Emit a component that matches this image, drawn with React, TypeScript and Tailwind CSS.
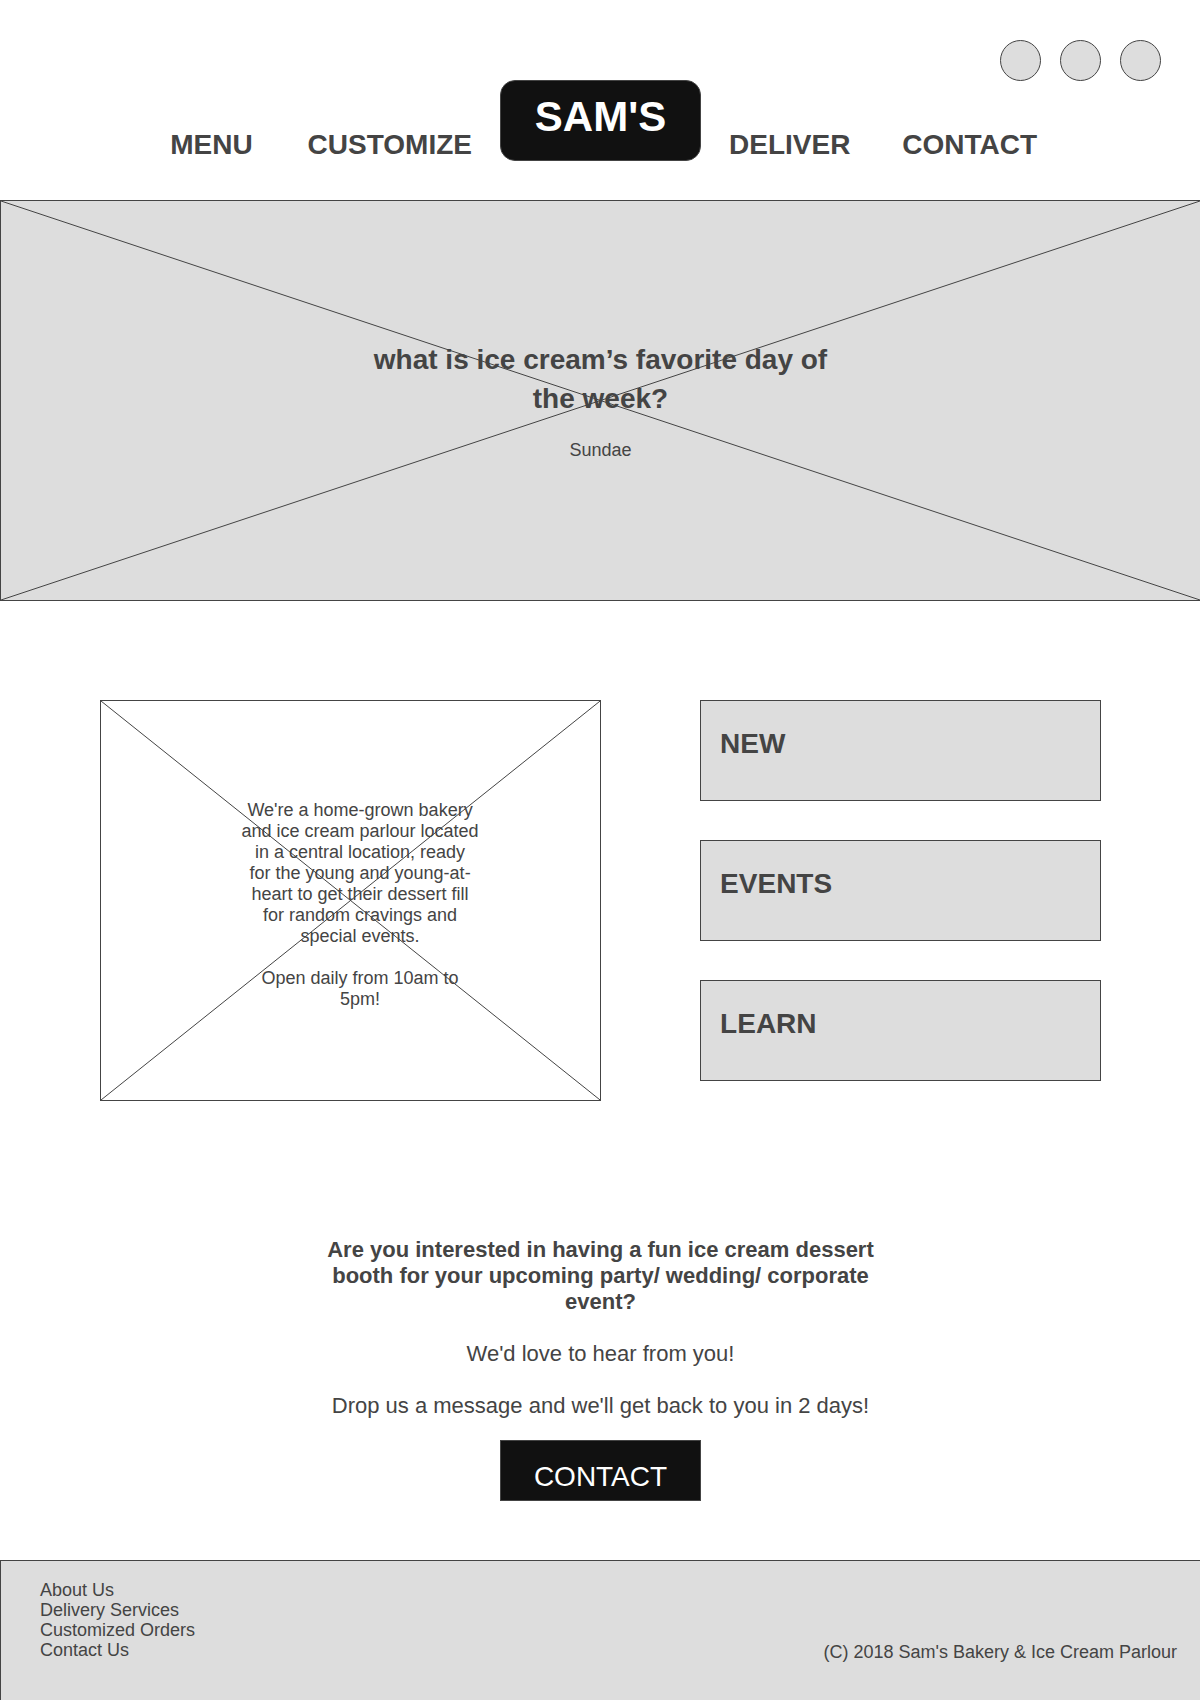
import React from "react";

function Diagonals() {
  return (
    <svg
      aria-hidden="true"
      className="absolute inset-0 h-full w-full"
      viewBox="0 0 100 100"
      preserveAspectRatio="none"
      fill="none"
      stroke="#444444"
      strokeWidth="1"
    >
      <line x1="0" y1="0" x2="100" y2="100" vectorEffect="non-scaling-stroke" />
      <line x1="100" y1="0" x2="0" y2="100" vectorEffect="non-scaling-stroke" />
    </svg>
  );
}

function NavLink({ children }: { children: React.ReactNode }) {
  return (
    <a href="#" className="text-[28px] leading-8 font-bold">
      {children}
    </a>
  );
}

const socials = ["Facebook", "Instagram", "Twitter"];
const topics = ["NEW", "EVENTS", "LEARN"];
const footerLinks = ["About Us", "Delivery Services", "Customized Orders", "Contact Us"];

export default function App() {
  return (
    <div className="flex min-h-screen flex-col overflow-x-hidden bg-white font-['Liberation_Sans',Arial,sans-serif] text-[#444444]">
      <header className="pt-10 pb-[39px]">
        <div className="flex justify-end gap-[19px] pr-[39px]">
          {socials.map((name) => (
            <a
              key={name}
              href="#"
              aria-label={name}
              className="size-[41px] rounded-full border border-[#444444] bg-[#dddddd]"
            />
          ))}
        </div>
        <nav className="-mt-px grid grid-cols-[1fr_201px_1fr] items-end pl-px">
          <div className="flex justify-end gap-[55px] pr-7">
            <NavLink>MENU</NavLink>
            <NavLink>CUSTOMIZE</NavLink>
          </div>
          <a
            href="#"
            className="h-[81px] rounded-[15px] border border-[#444444] bg-[#111111] pt-[15px] text-center text-[42px] leading-[42px] font-bold text-white"
          >
            SAM'S
          </a>
          <div className="flex gap-[52px] pl-7">
            <NavLink>DELIVER</NavLink>
            <NavLink>CONTACT</NavLink>
          </div>
        </nav>
      </header>

      <main>
        <section className="relative flex h-[401px] items-center justify-center border-y border-l border-[#444444] bg-[#dddddd]">
          <Diagonals />
          <div className="relative w-[500px] text-center">
            <h1 className="text-[28px] leading-[39px] font-bold">
              what is ice cream’s favorite day of the week?
            </h1>
            <p className="mt-[22px] text-lg leading-[21px]">Sundae</p>
          </div>
        </section>

        <section className="grid grid-cols-[5fr_4fr] gap-[99px] pt-[99px] pr-[99px] pl-[100px]">
          <div className="relative flex h-[401px] justify-center border border-[#444444] pt-[99px] pl-[19px]">
            <Diagonals />
            <div className="relative w-[240px] text-center text-lg leading-[21px]">
              <p>
                We're a home-grown bakery and ice cream parlour located in a central location, ready
                <br />
                for the young and young-at-heart to get their dessert fill for random cravings and
                special events.
              </p>
              <p className="mt-[21px]">Open daily from 10am to 5pm!</p>
            </div>
          </div>
          <div className="flex flex-col gap-[39px]">
            {topics.map((topic) => (
              <a
                key={topic}
                href="#"
                className="h-[101px] border border-[#444444] bg-[#dddddd] px-[19px] pt-[29px] text-[28px] leading-7 font-bold"
              >
                {topic}
              </a>
            ))}
          </div>
        </section>

        <section className="flex flex-col items-center pt-[136px] pb-[59px] pl-px">
          <div className="flex w-[560px] flex-col gap-[26px] text-center text-[22px] leading-[26px]">
            <h2 className="font-bold">
              Are you interested in having a fun ice cream dessert booth for your upcoming party/
              wedding/ corporate event?
            </h2>
            <p>We'd love to hear from you!</p>
            <p>Drop us a message and we'll get back to you in 2 days!</p>
          </div>
          <button
            type="button"
            className="mt-[21px] w-[201px] border border-[#444444] bg-[#111111] pt-[22px] pb-[9px] text-[28px] leading-7 text-white"
          >
            CONTACT
          </button>
        </section>
      </main>

      <footer className="flex grow items-end justify-between border-t border-l border-[#444444] bg-[#dddddd] pt-[19px] pr-[23px] pb-[38px] pl-[39px] text-lg leading-5">
        <ul className="self-start">
          {footerLinks.map((link) => (
            <li key={link}>
              <a href="#">{link}</a>
            </li>
          ))}
        </ul>
        <p>(C) 2018 Sam's Bakery &amp; Ice Cream Parlour</p>
      </footer>
    </div>
  );
}
